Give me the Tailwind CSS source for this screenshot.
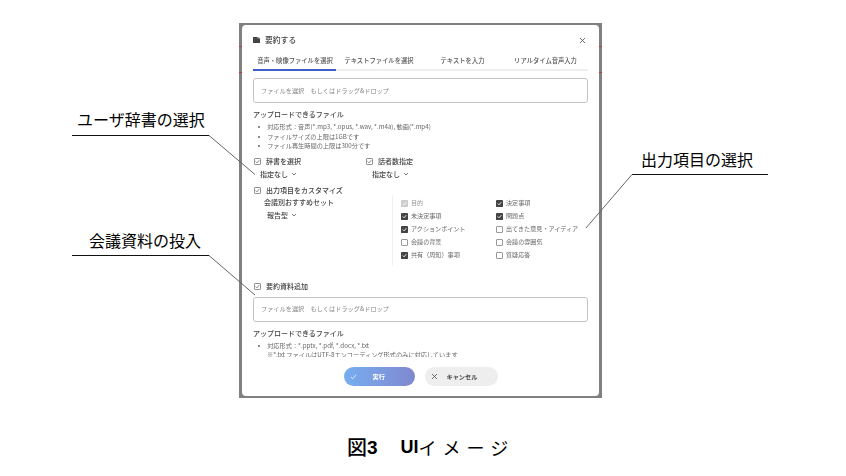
<!doctype html>
<html lang="ja"><head><meta charset="utf-8">
<script src="https://cdn.jsdelivr.net/npm/@tailwindcss/browser@4"></script>
</head>
<body class="bg-white">
<div class="relative w-[846px] h-[476px] overflow-hidden bg-white pt-[23px] pl-[239px] font-['Noto_Sans_CJK_JP','Noto_Sans',sans-serif]">
  <!-- screenshot frame -->
  <div class="w-[363px] h-[375px] bg-[#808080] pt-[2px] px-[3px] pb-[2px] blur-[0.5px]">
    <div class="w-full h-full bg-white rounded-[4px] flex flex-col overflow-hidden text-[#555]">
      <div class="h-[26px] shrink-0 flex items-center justify-between pl-[11px] pr-[13px] pt-[4px]">
        <div class="flex items-center gap-[5px]">
          <svg class="w-[7px] h-[7px]" viewBox="0 0 8 8"><path d="M0 1h4.500l1 1.500H8V8H0z" fill="#444"/><path d="M5 .5l3 2H5z" fill="#888"/></svg>
          <span class="text-[7.8px] leading-none font-medium text-[#444]">要約する</span>
        </div>
        <svg class="w-[7px] h-[7px]" viewBox="0 0 8 8"><path d="M1.200 1.200l5.600 5.600M6.800 1.200L1.200 6.800" stroke="#555" stroke-width="1" fill="none"/></svg>
      </div>
      <div class="px-[11px] shrink-0">
        <div class="grid grid-cols-[84px_83px_83px_85px] h-[20px] border-b-[2px] border-[#eeeeee] text-[6.3px] font-medium text-[#555] text-center pt-[5px] relative">
          <span>音声・映像ファイルを選択</span><span class="pl-[1px]">テキストファイルを選択</span><span class="pl-[2px]">テキストを入力</span><span>リアルタイム音声入力</span>
          <div class="absolute left-0 -bottom-[2px] w-[83px] h-[2px] bg-[#3f5fc8]"></div>
        </div>
      </div>
      <div class="flex-1 min-h-0 overflow-hidden px-[11px] pt-[7px]">
        <div class="h-[25px] border border-[#c4c4c4] rounded-[3px] flex items-center pl-[7px] text-[6.2px] text-[#888]">ファイルを選択　もしくはドラッグ&amp;ドロップ</div>
        <h3 class="mt-[6px] text-[7px] leading-[10px] font-medium text-[#444]">アップロードできるファイル</h3>
        <ul class="mt-[3px] pl-[5px] text-[6.2px] leading-[9.5px] text-[#666] list-disc list-inside">
          <li>対応形式：音声(*.mp3, *.opus, *.wav, *.m4a), 動画(*.mp4)</li>
          <li>ファイルサイズの上限は1GBです</li>
          <li>ファイル再生時間の上限は300分です</li>
        </ul>
        <div class="mt-[6px] flex">
          <div class="w-[112px]">
            <div class="flex items-center gap-[5px] pl-[1px] h-[9px] text-[7px] font-medium text-[#444]">
              <svg class="w-[7px] h-[7px] shrink-0" viewBox="0 0 8 8"><rect x=".5" y=".5" width="7" height="7" rx="1" fill="none" stroke="#555" stroke-width=".8"/><path d="M2 4l1.500 1.500L6 2.500" fill="none" stroke="#555" stroke-width=".8"/></svg>
              <span>辞書を選択</span>
            </div>
            <div class="mt-[4px] pl-[7px] flex items-center gap-[3px] h-[9px] text-[7px] font-medium text-[#444]"><span>指定なし</span><svg class="w-[6px] h-[6px]" viewBox="0 0 6 6"><path d="M1 2l2 2 2-2" fill="none" stroke="#555" stroke-width=".8"/></svg></div>
          </div>
          <div>
            <div class="flex items-center gap-[5px] pl-[1px] h-[9px] text-[7px] font-medium text-[#444]">
              <svg class="w-[7px] h-[7px] shrink-0" viewBox="0 0 8 8"><rect x=".5" y=".5" width="7" height="7" rx="1" fill="none" stroke="#555" stroke-width=".8"/><path d="M2 4l1.500 1.500L6 2.500" fill="none" stroke="#555" stroke-width=".8"/></svg>
              <span>話者数指定</span>
            </div>
            <div class="mt-[4px] pl-[7px] flex items-center gap-[3px] h-[9px] text-[7px] font-medium text-[#444]"><span>指定なし</span><svg class="w-[6px] h-[6px]" viewBox="0 0 6 6"><path d="M1 2l2 2 2-2" fill="none" stroke="#555" stroke-width=".8"/></svg></div>
          </div>
        </div>
        <div class="mt-[7px] flex items-center gap-[5px] pl-[1px] h-[9px] text-[7px] font-medium text-[#444]">
          <svg class="w-[7px] h-[7px] shrink-0" viewBox="0 0 8 8"><rect x=".5" y=".5" width="7" height="7" rx="1" fill="none" stroke="#555" stroke-width=".8"/><path d="M2 4l1.500 1.500L6 2.500" fill="none" stroke="#555" stroke-width=".8"/></svg>
          <span>出力項目をカスタマイズ</span>
        </div>
        <div class="flex h-[71px]">
          <div class="w-[139px] pl-[11px] text-[7px] font-medium text-[#444]">
            <div class="h-[9px] mt-[3px] leading-[9px]">会議別おすすめセット</div>
            <div class="mt-[4px] pl-[3px] flex items-center gap-[3px] h-[9px]"><span>報告型</span><svg class="w-[6px] h-[6px]" viewBox="0 0 6 6"><path d="M1 2l2 2 2-2" fill="none" stroke="#555" stroke-width=".8"/></svg></div>
          </div>
          <div class="border-l border-[#f0f0f0] pl-[8px] pt-[2px] grid grid-cols-[95px_90px] auto-rows-[13px] text-[6.1px] text-[#666]">
            <div class="flex items-center gap-[3px] text-[#999]"><svg class="w-[7px] h-[7px] shrink-0" viewBox="0 0 8 8"><rect width="8" height="8" rx="1" fill="#ccc"/><path d="M2 4l1.500 1.500L6 2.500" fill="none" stroke="#fff"/></svg><span>目的</span></div>
            <div class="flex items-center gap-[3px]"><svg class="w-[7px] h-[7px] shrink-0" viewBox="0 0 8 8"><rect width="8" height="8" rx="1" fill="#444"/><path d="M2 4l1.500 1.500L6 2.500" fill="none" stroke="#fff"/></svg><span>決定事項</span></div>
            <div class="flex items-center gap-[3px]"><svg class="w-[7px] h-[7px] shrink-0" viewBox="0 0 8 8"><rect width="8" height="8" rx="1" fill="#444"/><path d="M2 4l1.500 1.500L6 2.500" fill="none" stroke="#fff"/></svg><span>未決定事項</span></div>
            <div class="flex items-center gap-[3px]"><svg class="w-[7px] h-[7px] shrink-0" viewBox="0 0 8 8"><rect width="8" height="8" rx="1" fill="#444"/><path d="M2 4l1.500 1.500L6 2.500" fill="none" stroke="#fff"/></svg><span>問題点</span></div>
            <div class="flex items-center gap-[3px]"><svg class="w-[7px] h-[7px] shrink-0" viewBox="0 0 8 8"><rect width="8" height="8" rx="1" fill="#444"/><path d="M2 4l1.500 1.500L6 2.500" fill="none" stroke="#fff"/></svg><span>アクションポイント</span></div>
            <div class="flex items-center gap-[3px]"><span class="w-[7px] h-[7px] shrink-0 border border-[#999] rounded-[1px]"></span><span>出てきた意見・アイディア</span></div>
            <div class="flex items-center gap-[3px]"><span class="w-[7px] h-[7px] shrink-0 border border-[#999] rounded-[1px]"></span><span>会議の背景</span></div>
            <div class="flex items-center gap-[3px]"><span class="w-[7px] h-[7px] shrink-0 border border-[#999] rounded-[1px]"></span><span>会議の雰囲気</span></div>
            <div class="flex items-center gap-[3px]"><svg class="w-[7px] h-[7px] shrink-0" viewBox="0 0 8 8"><rect width="8" height="8" rx="1" fill="#444"/><path d="M2 4l1.500 1.500L6 2.500" fill="none" stroke="#fff"/></svg><span>共有（周知）事項</span></div>
            <div class="flex items-center gap-[3px]"><span class="w-[7px] h-[7px] shrink-0 border border-[#999] rounded-[1px]"></span><span>質疑応答</span></div>
          </div>
        </div>
        <div class="mt-[16px] flex items-center gap-[5px] pl-[1px] h-[9px] text-[7px] font-medium text-[#444]">
          <svg class="w-[7px] h-[7px] shrink-0" viewBox="0 0 8 8"><rect x=".5" y=".5" width="7" height="7" rx="1" fill="none" stroke="#555" stroke-width=".8"/><path d="M2 4l1.500 1.500L6 2.500" fill="none" stroke="#555" stroke-width=".8"/></svg>
          <span>要約資料追加</span>
        </div>
        <div class="mt-[6px] h-[25px] border border-[#c4c4c4] rounded-[3px] flex items-center pl-[7px] text-[6.2px] text-[#888]">ファイルを選択　もしくはドラッグ&amp;ドロップ</div>
        <h3 class="mt-[6px] text-[7px] leading-[10px] font-medium text-[#444]">アップロードできるファイル</h3>
        <ul class="mt-[3px] pl-[5px] text-[6.2px] leading-[9.5px] text-[#666] list-disc list-inside">
          <li>対応形式：*.pptx, *.pdf, *.docx, *.txt</li>
          <li class="list-none pl-[9px]">※*.txt ファイルはUTF-8エンコーディング形式のみに対応しています</li>
        </ul>
      </div>
      <div class="h-[39px] shrink-0 flex justify-center gap-[10px] pt-[10px] pr-[3px] pl-[3px]">
        <div class="w-[71px] h-[19px] rounded-full bg-gradient-to-r from-[#76aef0] to-[#7f88cf] flex items-center text-white text-[6.2px] font-bold">
          <svg class="ml-[6px] w-[7px] h-[7px]" viewBox="0 0 8 8"><path d="M1 4.500l2 2L7 2" fill="none" stroke="#fff" stroke-width=".8"/></svg>
          <span class="ml-[16px]">実行</span>
        </div>
        <div class="w-[73px] h-[19px] rounded-full bg-[#eeeeee] flex items-center text-[#444] text-[6.2px] font-bold">
          <svg class="ml-[6px] w-[7px] h-[7px]" viewBox="0 0 8 8"><path d="M1.200 1.200l5.600 5.600M6.800 1.200L1.200 6.800" stroke="#555" stroke-width="1" fill="none"/></svg>
          <span class="ml-[9px]">キャンセル</span>
        </div>
      </div>
    </div>
  </div>

  <!-- caption -->
  <div class="absolute left-[347px] top-[434px] h-[26px] flex items-center text-black text-[18px] leading-none font-['Liberation_Sans','Noto_Sans_CJK_JP',sans-serif] whitespace-nowrap">
    <span class="font-['Noto_Sans_CJK_JP'] font-medium text-[20px]">図</span><span class="font-bold text-[19px]">3</span><span class="w-[23px]"></span><span class="font-bold">UI</span><span class="font-['Noto_Sans_CJK_JP'] tracking-[6px]">イメージ</span>
  </div>

  <!-- callouts over the page -->
  <span class="absolute left-[77px] top-[108px] text-[16px] leading-[22px] text-black whitespace-nowrap">ユーザ辞書の選択</span>
  <span class="absolute left-[89px] top-[229px] text-[16px] leading-[22px] text-black whitespace-nowrap">会議資料の投入</span>
  <span class="absolute left-[641px] top-[148px] text-[16px] leading-[22px] text-black whitespace-nowrap">出力項目の選択</span>
  <svg class="absolute left-0 top-0 w-[846px] h-[476px] pointer-events-none" viewBox="0 0 846 476" fill="none">
    <path d="M72 135.500H209" stroke="#111"/><path d="M209 135.500L255 174.500" stroke="#666"/>
    <path d="M72 255.500H209" stroke="#111"/><path d="M209 255.500L255 295" stroke="#666"/>
    <path d="M632 174.500H768" stroke="#111"/><path d="M632 174.500L586 228" stroke="#666"/>
    <path d="M239 46.500h3M239 72.500h3M599 46.500h3M599 72.500h3" stroke="#b04040"/>
  </svg>
</div>
</body></html>
